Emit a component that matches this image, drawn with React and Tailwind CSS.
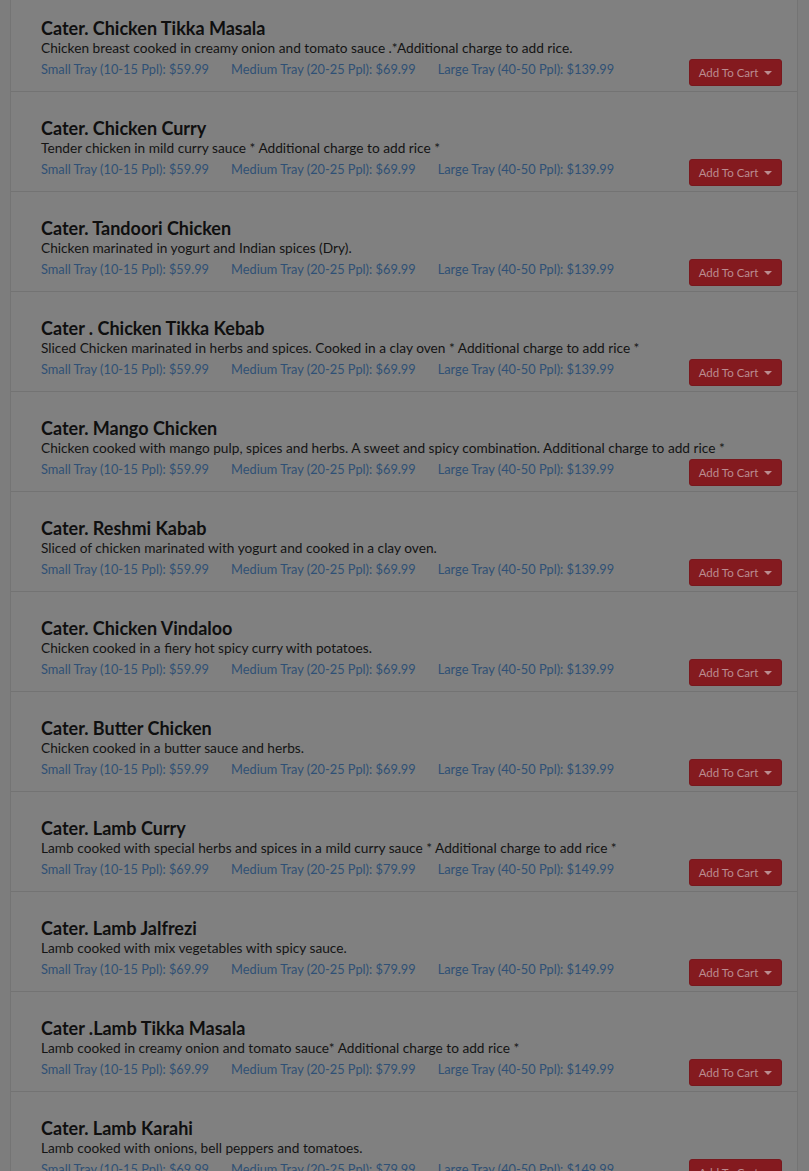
const items = [
  { name: 'Cater. Chicken Tikka Masala', desc: 'Chicken breast cooked in creamy onion and tomato sauce .*Additional charge to add rice.', p: ['59.99', '69.99', '139.99'] },
  { name: 'Cater. Chicken Curry', desc: 'Tender chicken in mild curry sauce * Additional charge to add rice *', p: ['59.99', '69.99', '139.99'] },
  { name: 'Cater. Tandoori Chicken', desc: 'Chicken marinated in yogurt and Indian spices (Dry).', p: ['59.99', '69.99', '139.99'] },
  { name: 'Cater . Chicken Tikka Kebab', desc: 'Sliced Chicken marinated in herbs and spices. Cooked in a clay oven * Additional charge to add rice *', p: ['59.99', '69.99', '139.99'] },
  { name: 'Cater. Mango Chicken', desc: 'Chicken cooked with mango pulp, spices and herbs. A sweet and spicy combination. Additional charge to add rice *', p: ['59.99', '69.99', '139.99'] },
  { name: 'Cater. Reshmi Kabab', desc: 'Sliced of chicken marinated with yogurt and cooked in a clay oven.', p: ['59.99', '69.99', '139.99'] },
  { name: 'Cater. Chicken Vindaloo', desc: 'Chicken cooked in a fiery hot spicy curry with potatoes.', p: ['59.99', '69.99', '139.99'] },
  { name: 'Cater. Butter Chicken', desc: 'Chicken cooked in a butter sauce and herbs.', p: ['59.99', '69.99', '139.99'] },
  { name: 'Cater. Lamb Curry', desc: 'Lamb cooked with special herbs and spices in a mild curry sauce * Additional charge to add rice *', p: ['69.99', '79.99', '149.99'] },
  { name: 'Cater. Lamb Jalfrezi', desc: 'Lamb cooked with mix vegetables with spicy sauce.', p: ['69.99', '79.99', '149.99'] },
  { name: 'Cater .Lamb Tikka Masala', desc: 'Lamb cooked in creamy onion and tomato sauce* Additional charge to add rice *', p: ['69.99', '79.99', '149.99'] },
  { name: 'Cater. Lamb Karahi', desc: 'Lamb cooked with onions, bell peppers and tomatoes.', p: ['69.99', '79.99', '149.99'] },
];

const trays = ['Small Tray (10-15 Ppl)', 'Medium Tray (20-25 Ppl)', 'Large Tray (40-50 Ppl)'];

function Row({ item }) {
  return (
    <div className="h-[100px] border-b border-[#737373] pl-[30px] pr-[15px] pt-[26px]">
      <h3 className="text-[18px] leading-[20px] font-bold text-[#0f0f0f] whitespace-nowrap">{item.name}</h3>
      <p className="text-[13.7px] leading-[20px] text-[#141414] whitespace-nowrap">{item.desc}</p>
      <div className="flex items-start justify-between">
        <div className="flex gap-[22px] text-[12.8px] leading-[22px] text-[#2f5075] whitespace-nowrap">
          {item.p.map((price, i) => (
            <span key={i}>{trays[i]}: ${price}</span>
          ))}
        </div>
        <button className="mt-[1px] h-[27px] w-[93px] flex items-center justify-center gap-[6px] rounded-[3px] bg-[#841a1f] border border-[#78181d] text-[11.5px] text-[#bb8c90]">
          Add To Cart
          <span className="w-0 h-0 border-x-[4px] border-x-transparent border-t-[4px] border-t-[#bb8c90]" />
        </button>
      </div>
    </div>
  );
}

export default function App() {
  return (
    <div className="min-h-screen bg-[#7d7d7d] overflow-hidden font-['Lato',sans-serif]">
      <div className="ml-[10px] mr-[11px] -mt-[8px] bg-[#808080] border-x border-[#747474]">
        {items.map((item) => (
          <Row key={item.name} item={item} />
        ))}
      </div>
    </div>
  );
}
